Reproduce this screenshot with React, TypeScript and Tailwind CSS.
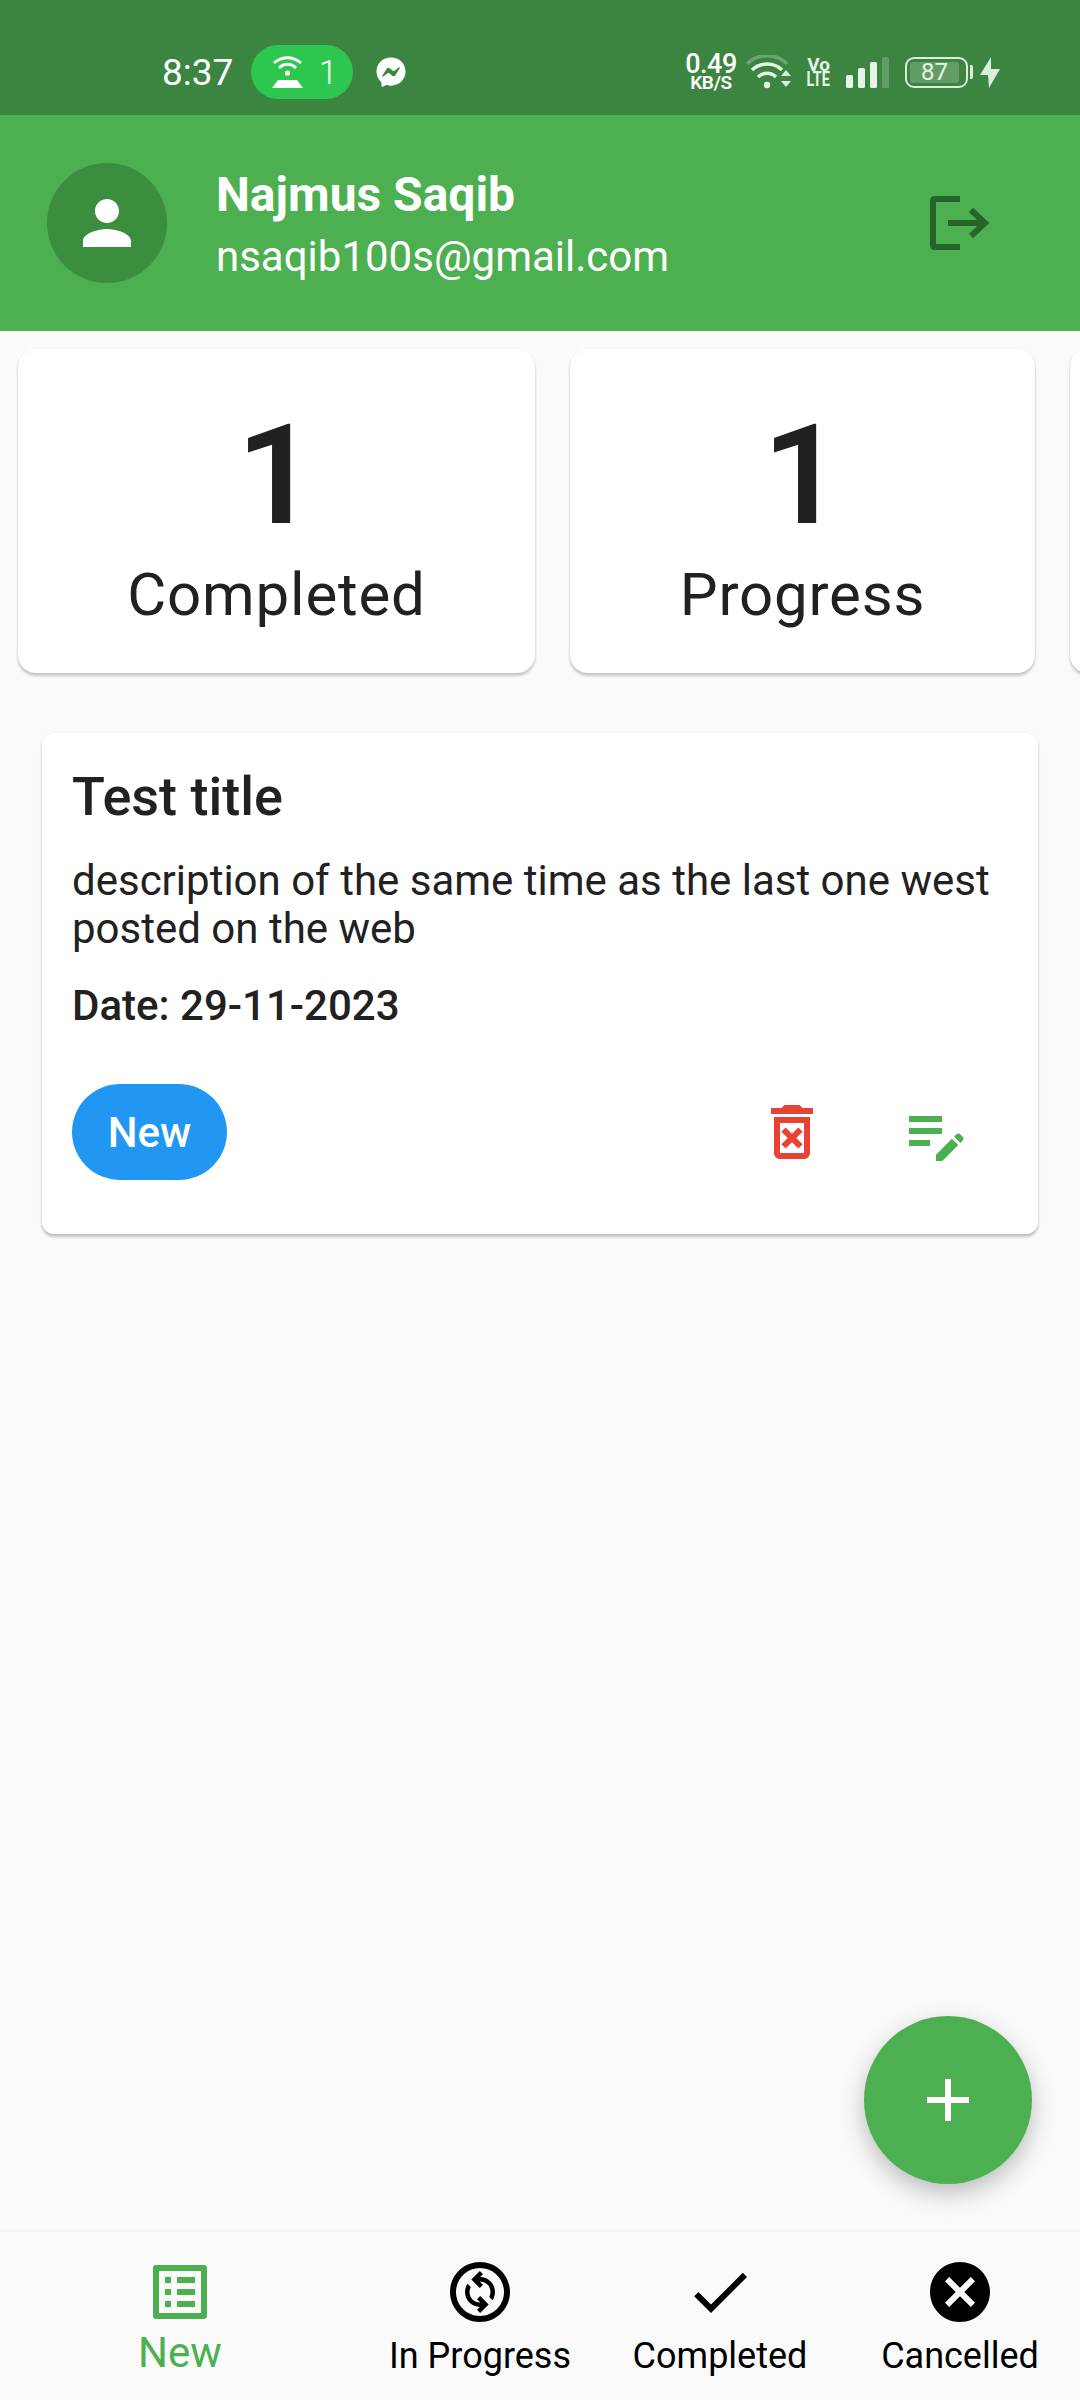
import { MdPerson, MdOutlineDeleteForever, MdEditNote, MdAdd, MdOutlineListAlt, MdOutlineChangeCircle, MdDone, MdCancel } from "react-icons/md";
import { FaFacebookMessenger } from "react-icons/fa";

function StatusBar() {
  return (
    <div className="h-[115px] bg-[#3c8540] flex items-center pl-[162px] pr-[80px] pt-[29px] text-white shrink-0">
      <span className="text-[37px] leading-none w-[73px]">8:37</span>
      <div className="ml-[16px] w-[102px] h-[54px] rounded-full bg-[#2dc750] flex items-center pl-[21px] gap-[16px]">
        <svg width="31" height="32" viewBox="0 0 31 32" fill="none" stroke="white" strokeWidth="2.8">
          <path d="M2 7 C10 0 21 0 29 7" />
          <path d="M7 12 C12 7 19 7 24 12" />
          <circle cx="15.5" cy="17" r="2.6" fill="white" stroke="none" />
          <path d="M0 32 L6 24 H25 L31 32 Z" fill="white" stroke="none" />
        </svg>
        <span className="text-[33px] leading-none font-light">1</span>
      </div>
      <FaFacebookMessenger className="ml-[23px] text-white" size={30} />
      <div className="ml-auto flex items-center">
        <div className="w-[50px] flex flex-col items-center text-white">
          <span className="text-[27px] leading-[21px] font-medium tracking-[-0.5px]">0.49</span>
          <span className="text-[19px] leading-[16px] font-semibold tracking-[-0.3px]">KB/S</span>
        </div>
        <svg className="ml-[10px]" width="45" height="34" viewBox="0 0 45 34" fill="none">
          <path d="M1 9 C11 -2 31 -2 41 9" stroke="white" strokeOpacity="0.25" strokeWidth="3.5" />
          <path d="M6 15 C14 7 28 7 36 15" stroke="#e6f3e7" strokeWidth="3.5" />
          <path d="M12 22 C17 17 25 17 30 22" stroke="#e6f3e7" strokeWidth="3.5" />
          <circle cx="21" cy="30" r="3.2" fill="#e6f3e7" />
          <path d="M35 21 L40 15 L45 21 Z M35 26 H45 L40 32 Z" fill="#dcecdd" />
        </svg>
        <div className="ml-[16px] w-[23px] flex flex-col items-center text-[#e6f3e7] font-bold">
          <span className="text-[19px] leading-[15px]">Vo</span>
          <span className="text-[20px] leading-[15px] scale-x-[0.72]">LTE</span>
        </div>
        <svg className="ml-[16px]" width="43" height="31" viewBox="0 0 43 31">
          <rect x="0" y="18" width="7" height="13" rx="1.5" fill="#e6f3e7" />
          <rect x="12" y="11" width="7" height="20" rx="1.5" fill="#e6f3e7" />
          <rect x="24" y="5" width="7" height="26" rx="1.5" fill="#e6f3e7" />
          <rect x="36" y="0" width="7" height="31" rx="1.5" fill="white" fillOpacity="0.2" />
        </svg>
        <div className="ml-[16px] flex items-center">
          <div className="w-[63px] h-[31px] rounded-[9px] border-[2px] border-[#dcecdd] p-[3px] relative flex">
            <div className="w-[49px] bg-white/20 rounded-[3px]" />
            <span className="absolute inset-0 flex items-center justify-center text-[24px] leading-none text-[#e6f3e7] pr-[4px]">87</span>
          </div>
          <div className="ml-[2px] w-[3px] h-[14px] rounded-r-[2px] bg-[#dcecdd]" />
        </div>
        <svg className="ml-[7px]" width="20" height="31" viewBox="0 0 20 31">
          <path d="M11 0 L0 18 H8 L9 31 L20 12 H11 Z" fill="#dcecdd" />
        </svg>
      </div>
    </div>
  );
}

function Header() {
  return (
    <div className="h-[216px] bg-[#4caf50] flex items-center pl-[47px] pr-[90px] shrink-0">
      <div className="w-[120px] h-[120px] rounded-full bg-[#3a8e3e] flex items-center justify-center">
        <MdPerson className="text-white" size={72} />
      </div>
      <div className="ml-[49px] pt-[6px] flex flex-col text-white">
        <span className="text-[48px] leading-[62px] font-bold">Najmus Saqib</span>
        <span className="text-[42px] leading-[62px]">nsaqib100s@gmail.com</span>
      </div>
      <svg className="ml-auto" width="60" height="54" viewBox="0 0 60 54" fill="none" stroke="#25652a" strokeWidth="6">
        <path d="M30 3 H5 Q3 3 3 5 V49 Q3 51 5 51 H30" />
        <path d="M18 27 H54" />
        <path d="M41 14 L55 27 L41 40" />
      </svg>
    </div>
  );
}

const statCardClass = "h-[324px] shrink-0 bg-white rounded-[18px] shadow-[0_3px_3px_rgba(0,0,0,0.2),0_0_2px_rgba(0,0,0,0.08)]";

function StatCard({ width, label }: { width: string; label: string }) {
  return (
    <div className={`${width} ${statCardClass} flex flex-col items-center pt-[54px] text-[#212121]`}>
      <span className="text-[140px] leading-[144px] font-semibold">1</span>
      <span className="text-[60px] leading-[60px] mt-[18px] tracking-[0.8px]">{label}</span>
    </div>
  );
}

function TaskCard() {
  return (
    <div className="mx-[42px] mt-[54px] h-[501px] bg-white rounded-[12px] shadow-[0_3px_3px_rgba(0,0,0,0.22),0_0_2px_rgba(0,0,0,0.08)] px-[30px] pt-[32px] text-[#212121]">
      <div className="text-[54px] leading-[64px] font-medium">Test title</div>
      <div className="text-[42px] leading-[48px] mt-[28px]">description of the same time as the last one west posted on the web</div>
      <div className="text-[42px] leading-[50px] font-medium mt-[28px]">Date: 29-11-2023</div>
      <div className="flex items-center mt-[53px] pr-[36px]">
        <div className="w-[155px] h-[96px] rounded-full bg-[#2196f3] flex items-center justify-center text-white text-[42px] font-medium">New</div>
        <MdOutlineDeleteForever className="ml-auto text-[#e94235]" size={72} />
        <MdEditNote className="ml-[72px] mt-[4px] text-[#4caf50]" size={72} />
      </div>
    </div>
  );
}

function NavItem({ icon, label, active }: { icon: React.ReactNode; label: string; active?: boolean }) {
  return (
    <div className={`${active ? "flex-[1.5] text-[#4caf50]" : "flex-1 text-black"} flex flex-col items-center pt-[24px]`}>
      {icon}
      {active ? (
        <span className="text-[42px] leading-[42px] mt-[4px]">{label}</span>
      ) : (
        <span className="text-[36px] leading-[42px] mt-[7px] whitespace-nowrap">{label}</span>
      )}
    </div>
  );
}

export default function App() {
  return (
    <div className="w-[1080px] h-[2400px] bg-[#fafafa] flex flex-col overflow-hidden font-['Roboto',sans-serif]">
      <StatusBar />
      <Header />
      <div className="flex-1 relative overflow-hidden">
        <div className="flex pl-[18px] pt-[18px] gap-[35px] overflow-hidden pb-[6px]">
          <StatCard width="w-[517px]" label="Completed" />
          <StatCard width="w-[465px]" label="Progress" />
          <div className={`w-[400px] ${statCardClass}`} />
        </div>
        <TaskCard />
        <button className="absolute right-[48px] bottom-[48px] w-[168px] h-[168px] rounded-full bg-[#4caf50] flex items-center justify-center shadow-[0_9px_24px_rgba(0,0,0,0.25)]">
          <MdAdd className="text-white" size={72} />
        </button>
      </div>
      <div className="h-[168px] shrink-0 bg-[#fafafa] flex shadow-[0_-1px_3px_rgba(0,0,0,0.06)] relative">
        <NavItem active label="New" icon={<MdOutlineListAlt size={72} />} />
        <NavItem label="In Progress" icon={<MdOutlineChangeCircle size={72} />} />
        <NavItem label="Completed" icon={<MdDone size={72} />} />
        <NavItem label="Cancelled" icon={<MdCancel size={72} />} />
      </div>
    </div>
  );
}
